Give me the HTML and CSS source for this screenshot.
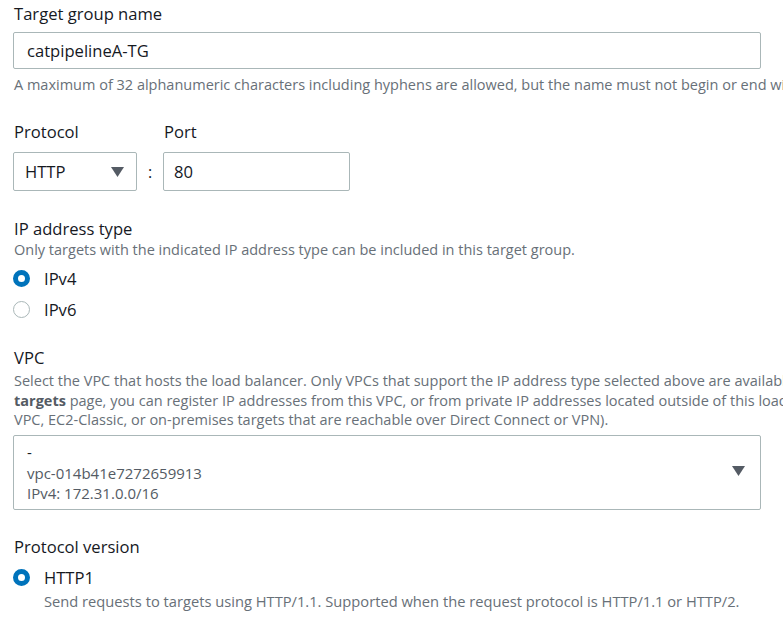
FILE: index.html
```html
<!DOCTYPE html>
<html lang="en">
<head>
<meta charset="utf-8">
<title>Target group</title>
<link rel="stylesheet" href="styles.css">
</head>
<body>
<main class="form">
  <section class="field field-name">
    <div class="label">Target group name</div>
    <div class="input input-wide">catpipelineA-TG</div>
    <div class="hint nowrap">A maximum of 32 alphanumeric characters including hyphens are allowed, but the name must not begin or end with a hyphen.</div>
  </section>

  <section class="field field-proto">
    <div class="proto-row">
      <div class="proto-col">
        <div class="label">Protocol</div>
        <div class="select select-proto">
          <span>HTTP</span>
          <svg class="caret" width="13" height="10" viewBox="0 0 13 10"><path d="M0 0H13L6.5 10Z" fill="#545b64"/></svg>
        </div>
      </div>
      <div class="colon">:</div>
      <div class="port-col">
        <div class="label">Port</div>
        <div class="input input-port">80</div>
      </div>
    </div>
  </section>

  <section class="field field-ip">
    <div class="label">IP address type</div>
    <div class="hint">Only targets with the indicated IP address type can be included in this target group.</div>
    <div class="radio-list">
      <div class="radio-row"><span class="radio checked"></span><span class="radio-label">IPv4</span></div>
      <div class="radio-row"><span class="radio"></span><span class="radio-label">IPv6</span></div>
    </div>
  </section>

  <section class="field field-vpc">
    <div class="label">VPC</div>
    <div class="hint hint-lines">
      <div class="nowrap">Select the VPC that hosts the load balancer. Only VPCs that support the IP address type selected above are available in this list. On the <b>Register</b></div>
      <div class="nowrap"><b>targets</b> page, you can register IP addresses from this VPC, or from private IP addresses located outside of this load balancer VPC, such as from a peered</div>
      <div class="nowrap">VPC, EC2-Classic, or on-premises targets that are reachable over Direct Connect or VPN).</div>
    </div>
    <div class="select select-vpc">
      <div class="vpc-text">
        <div class="vpc-name">-</div>
        <div class="vpc-meta">vpc-014b41e7272659913</div>
        <div class="vpc-meta">IPv4: 172.31.0.0/16</div>
      </div>
      <svg class="caret" width="13" height="10" viewBox="0 0 13 10"><path d="M0 0H13L6.5 10Z" fill="#545b64"/></svg>
    </div>
  </section>

  <section class="field field-version">
    <div class="label">Protocol version</div>
    <div class="radio-list">
      <div class="radio-row"><span class="radio checked"></span><span class="radio-label">HTTP1</span></div>
      <div class="radio-desc">Send requests to targets using HTTP/1.1. Supported when the request protocol is HTTP/1.1 or HTTP/2.</div>
    </div>
  </section>
</main>
</body>
</html>
```
FILE: styles.css
```css
html, body {
  margin: 0;
  padding: 0;
  overflow: hidden;
  background: #ffffff;
}
body {
  font-family: "Open Sans", "Noto Sans", Arial, sans-serif;
  color: #16191f;
  width: 783px;
  height: 623px;
}
.form {
  padding: 3px 0 0 13px;
  width: 748px;
}
.label {
  font-size: 16.6px;
  line-height: 22px;
  color: #16191f;
  padding-left: 1px;
}
.hint {
  font-size: 14.5px;
  line-height: 20px;
  color: #687078;
  padding-left: 1px;
}
.nowrap { white-space: nowrap; }
.hint b { font-weight: 700; color: #545b64; }

.input, .select {
  box-sizing: border-box;
  border: 1px solid #aab7b8;
  border-radius: 2px;
  background: #fff;
  font-size: 16.6px;
  color: #16191f;
}
.input-wide {
  margin-top: 7px;
  height: 37px;
  padding: 0 13px;
  display: flex;
  align-items: center;
}
.field-name .hint { margin-top: 6px; }

.field-proto { margin-top: 26px; }
.proto-row { display: flex; align-items: flex-start; }
.proto-col .select, .port-col .input { margin-top: 9px; height: 39px; }
.select-proto {
  width: 124px;
  display: flex;
  align-items: center;
  justify-content: space-between;
  padding: 0 12px 0 11px;
}
.select-proto .caret { margin-top: 1px; }
.colon {
  width: 26px;
  margin-top: 31px;
  height: 39px;
  display: flex;
  align-items: center;
  justify-content: center;
  font-size: 16px;
}
.input-port {
  width: 187px;
  display: flex;
  align-items: center;
  padding: 0 10px;
}

.field-ip { margin-top: 27px; }
.radio-list { margin-top: 7px; display: flex; flex-direction: column; gap: 9px; }
.radio-row { display: flex; align-items: center; height: 22px; }
.radio {
  box-sizing: border-box;
  width: 17px;
  height: 17px;
  border-radius: 50%;
  border: 1px solid #aab7b8;
  margin-left: 0;
  margin-right: 14px;
  background: #fff;
}
.radio.checked {
  border: 5.5px solid #0073bb;
}
.radio-label { font-size: 16.6px; color: #16191f; }

.field-vpc { margin-top: 27px; }
.hint-lines { margin-top: 2px; line-height: 19.5px; }
.select-vpc {
  margin-top: 5px;
  height: 75px;
  display: flex;
  align-items: center;
  justify-content: space-between;
  padding: 0 15px 0 13px;
}
.vpc-text { display: flex; flex-direction: column; }
.vpc-name { font-size: 15px; line-height: 22px; color: #16191f; }
.vpc-meta { font-size: 15px; line-height: 20px; color: #545b64; }
.select-vpc .caret { margin-top: -2px; }

.field-version { margin-top: 26px; }
.field-version .radio-list { margin-top: 9px; gap: 2px; }
.radio-desc {
  font-size: 14.7px;
  line-height: 20px;
  color: #687078;
  padding-left: 31px;
}
```
